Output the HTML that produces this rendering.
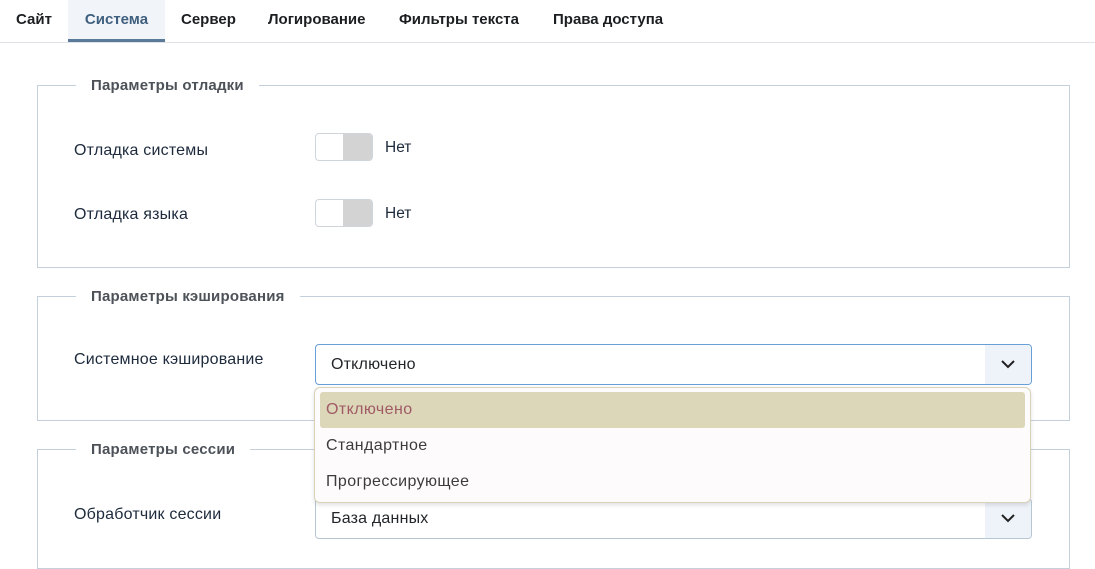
<!DOCTYPE html>
<html><head><meta charset="utf-8"><style>
*{box-sizing:border-box;margin:0;padding:0}
body{width:1095px;height:554px;overflow:hidden;background:#fff;font-family:"Liberation Sans","DejaVu Sans",sans-serif;position:relative;color:#22262a}
.tabs{position:absolute;top:0;left:0;right:0;height:43px;border-bottom:1px solid #dfe3e7}
.tab{position:absolute;top:0;height:42px;line-height:40px;font-size:15px;font-weight:bold;color:#1c1f22}
.tab.active{background:#f1f4f8;color:#3f5f7f;border-bottom:3px solid #5a7a9a}
.fs{position:absolute;left:37px;width:1033px;border:1px solid #c3d0dc}
.leg{position:absolute;top:-10px;left:38px;background:#fff;padding:0 15px;font-size:15px;font-weight:bold;color:#4c5258;line-height:20px;letter-spacing:.2px}
.lbl{position:absolute;left:74px;font-size:16px;letter-spacing:.2px;color:#1c2a3c}
.sw{position:absolute;left:315px;width:58px;height:28px;border:1px solid #cfd5db;border-radius:4px;background:#fff;overflow:hidden}
.sw i{position:absolute;right:0;top:0;bottom:0;width:29px;background:#d3d3d3}
.no{position:absolute;left:385px;font-size:15.5px;color:#1c2a3c}
.sel{position:absolute;left:315px;width:717px;height:41px;border:1px solid #b8c6d4;border-radius:4px;background:#fff;font-size:16px;letter-spacing:.2px;padding-left:15px;line-height:39px;overflow:hidden}
.sel .btn{position:absolute;right:0;top:0;bottom:0;width:46px;background:#eef2f9}
.dd{position:absolute;left:314px;top:387px;width:717px;height:116px;background:#fdfbfb;border:1px solid #d8d2b8;border-radius:6px;box-shadow:0 2px 4px rgba(0,0,0,.12)}
.opt{position:absolute;left:5px;right:5px;height:36px;line-height:36px;padding-left:6px;font-size:16px;letter-spacing:.4px;color:#3c3c3c}
</style></head><body>
<div class="tabs">
<div class="tab" style="left:16px">Сайт</div>
<div class="tab active" style="left:68px;width:97px;text-align:center">Система</div>
<div class="tab" style="left:181px">Сервер</div>
<div class="tab" style="left:268px">Логирование</div>
<div class="tab" style="left:399px">Фильтры текста</div>
<div class="tab" style="left:553px">Права доступа</div>
</div>
<div class="fs" style="top:85px;height:183px"><div class="leg">Параметры отладки</div></div>
<div class="lbl" style="top:142px">Отладка системы</div>
<div class="sw" style="top:133px"><i></i></div><div class="no" style="top:139px">Нет</div>
<div class="lbl" style="top:206px">Отладка языка</div>
<div class="sw" style="top:199px"><i></i></div><div class="no" style="top:205px">Нет</div>
<div class="fs" style="top:296px;height:125px"><div class="leg">Параметры кэширования</div></div>
<div class="lbl" style="top:351px">Системное кэширование</div>
<div class="sel" style="top:344px;border-color:#6a9ed6">Отключено<div class="btn"><svg width="46" height="39"><path d="M17 16l6 6 6-6" stroke="#222" stroke-width="2" fill="none"/></svg></div></div>
<div class="fs" style="top:449px;height:120px"><div class="leg">Параметры сессии</div></div>
<div class="lbl" style="top:506px">Обработчик сессии</div>
<div class="sel" style="top:498px">База данных<div class="btn"><svg width="46" height="39"><path d="M17 16l6 6 6-6" stroke="#222" stroke-width="2" fill="none"/></svg></div></div>
<div class="dd">
<div class="opt" style="top:4px;background:#dcd7b9;border-radius:3px;color:#a05a66">Отключено</div>
<div class="opt" style="top:40px">Стандартное</div>
<div class="opt" style="top:76px">Прогрессирующее</div>
</div>
</body></html>
